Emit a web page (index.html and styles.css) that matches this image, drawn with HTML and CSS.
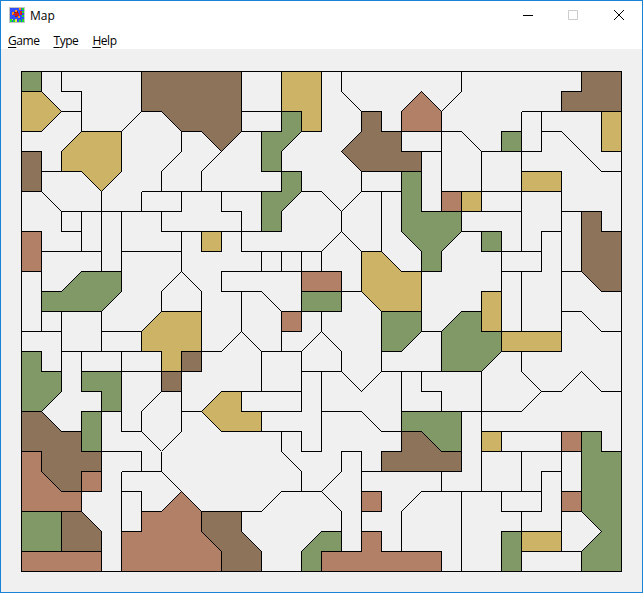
FILE: index.html
```html
<!DOCTYPE html>
<html lang="en">
<head>
<meta charset="utf-8">
<title>Map</title>
<link rel="stylesheet" href="styles.css">
</head>
<body>
<div class="window">
  <header class="titlebar">
    <svg class="app-icon" width="16" height="16" viewBox="0 0 16 16" shape-rendering="crispEdges">
      <path fill="#c4c4c4" d="M0 0h16v16H0z"/>
      <path fill="#2f4fff" d="M1 1h14v14H1z"/>
      <path fill="#16e02c" d="M13 1h2v2h-2zM13 4h2v2h-2zM1 12h2v3H1zM4 13h2v2H4zM10 13h2v2h-2zM13 12h2v3h-2zM13 8h2v2h-2z"/>
      <path fill="#ff8a1c" d="M10 1h2v2h-2zM3 5h2v3H3zM6 3h2v2H6zM9 9h2v2H9z"/>
      <path fill="#d81c1c" d="M6 5h2v4H6zM11 4h2v4h-2zM4 7h3v1H4zM8 6h2v3H8z"/>
      <path fill="#8a2818" d="M5 5h2v1H5zM8 4h1v2H8zM6 9h2v1H6z"/>
      <path fill="#e8e43a" d="M3 12h1v1H3zM6 12h2v3H6z"/>
    </svg>
    <span class="title">Map</span>
    <div class="controls">
      <svg class="control control-min" width="10" height="10" viewBox="0 0 10 10"><path d="M0 5.5h10"/></svg>
      <svg class="control control-off" width="10" height="10" viewBox="0 0 10 10"><path d="M.5 .5h9v9h-9z"/></svg>
      <svg class="control" width="10" height="10" viewBox="0 0 10 10"><path d="M0 0L10 10M10 0L0 10"/></svg>
    </div>
  </header>
  <nav class="menubar">
    <span class="menu"><u>G</u>ame</span>
    <span class="menu"><u>T</u>ype</span>
    <span class="menu"><u>H</u>elp</span>
  </nav>
  <main class="board">
    <svg width="602" height="502" viewBox="-0.025 -0.025 30.1 25.1" shape-rendering="crispEdges">
      <path class="green" d="M0 0H1V1H0z
        M13 2H14V3L13 4V5H12V3H13z
        M13 5H14V6L13 7V8H12V6H13z
        M19 5H20V7H22V8L21 9V10H20V9L19 8z
        M24 3H25V4H24z M23 8H24V9H23z
        M3 10H5V11L4 12H1V11H2z
        M14 11H16V12H14z
        M18 12H20V13L19 14H18z
        M22 12H23V13H24V14L23 15H21V13z
        M0 14H1V15H2V16L1 17H0z
        M3 15H5V17H4V16H3z
        M3 17H4V19H3z M0 22H2V24H0z
        M19 17H22V19H21L20 18H19z
        M15 23H16V24H15V25H14V24z
        M24 23H25V25H24z
        M28 18H29V19H30V25H28V24L29 23L28 22z"/>
      <path class="yellow" d="M0 1H1L2 2L1 3H0z
        M3 3H5V5L4 6L3 5H2V4z
        M13 0H15V3H14V2H13z
        M29 2H30V4H29z M25 5H27V6H25z M22 6H23V7H22z M9 8H10V9H9z
        M17 9H18L19 10H20V12H18L17 11z
        M23 11H24V13H23z M24 13H27V14H24z
        M7 12H9V14H8V15H7V14H6V13z
        M10 16H11V17H12V18H10L9 17z
        M23 18H24V19H23z M25 23H27V24H25z"/>
      <path class="brown" d="M6 0H11V3L10 4L9 3H8L7 2H6z
        M0 4H1V6H0z
        M17 2H18V3H19V4H20V5H17L16 4L17 3z
        M28 0H30V2H27V1H28z
        M28 7H29V8H30V11H29L28 10z
        M8 14H9V15H8z M7 15H8V16H7z
        M19 18H20L21 19H22V20H18V19H19z
        M0 17H1L2 18H3V19H4V20H3V21H2L1 20V19H0z
        M2 22H3L4 23V24H2z
        M9 22H11V23L12 24V25H10V24L9 23z"/>
      <path class="red" d="M20 1L21 2V3H19V2z
        M21 6H22V7H21z M0 8H1V10H0z M14 10H16V11H14z M13 12H14V13H13z
        M0 19H1V20L2 21H3V22H0z
        M3 20H4V21H3z M0 24H4V25H0z
        M8 21L9 22V23L10 24V25H5V23H6V22H7z
        M17 21H18V22H17z
        M15 24H17V23H18V24H21V25H15z
        M27 18H28V19H27z M27 21H28V22H27z"/>
      <path class="border" d="M0 0H30V25H0z
        M2 0V1H3V3H5 M2 2H3 M6 2L5 3 M1 5H2 M1 6L2 7H8 M4 6V10
        M2 7V8H3 M3 7V9 M5 7V10 M8 3V4L7 5V6 M10 4L9 5V6 M6 6H13
        M6 6V7 M8 6V7 M10 6V7H11V9 M7 7V8H13 M8 8V10
        M11 2H13 M11 3H13 M13 5V6 M14 6H15L16 7L17 6H19 M16 7V8L15 9
        M16 8L17 9 M17 5V6 M18 6V9 M16 0V1L17 2 M19 3H21 M20 4H21 M20 4V7
        M22 0V1L21 2 M21 3H22L23 4H25 M21 3V7 M23 4V7 M21 6H27 M20 7H25
        M25 2V9 M26 2V4H25 M25 2H30 M26 3H27L29 5H30 M27 6V14 M27 7H28
        M22 8H24 M24 8V14 M27 8H26V10H24 M24 9H26 M25 10V13 M27 10H28
        M27 12H28L29 13H30 M20 10V13H21 M25 14V15L26 16H27L28 15L29 16H30
        M26 16L25 17H19 M18 15H23 M20 15V16H21V17 M23 15V21
        M1 9H4 M5 9H8 M1 8V13 M0 13H2 M2 12V16 M4 12V14 M4 13H6
        M2 14H7 M3 14V15 M5 14V15 M5 15H9 M7 12V11L8 10L9 11V12
        M9 14H10L11 13L12 14H14 M14 10H10V11H12L13 12 M8 16V18L7 19
        M7 16L6 17V18L7 19 M5 17V18H6 M8 17H9
        M11 9H15 M12 9V10 M13 9V10 M14 9V12 M15 9V10 M16 11H17 M11 11V13
        M13 13V14 M15 12V13L14 14 M15 13L16 14V15L17 16L18 15 M14 15H16
        M18 14V15 M12 14V16 M11 16H14 M14 14V17H11 M15 15V19H14V18H12
        M19 15V17 M15 17H17L18 18H19 M13 18V19L14 20V21
        M9 22H12L13 21H15L16 20V19H17V24 M15 21L16 22V24 M17 20H18
        M19 24V22L20 21H26 M21 20V21 M22 21V25
        M23 18H27 M23 19H28 M25 19V21 M27 19V24 M27 20H26V22H24V21
        M25 22V23 M25 24H28
        M3 17H4V21 M4 19H6V20 M5 20H7 M7 19V20L8 21 M5 20V25
        M5 21H6V23H5 M4 24V25"/>
    </svg>
  </main>
</div>
</body>
</html>
```

FILE: styles.css
```css
body {
  margin: 0;
}

.window {
  box-sizing: border-box;
  width: 643px;
  height: 593px;
  border: 1px solid #1883d7;
  background: #f0f0f0;
  color: #000;
  font: 12px/16px "Open Sans", "Noto Sans", sans-serif;
  overflow: hidden;
}

.titlebar {
  display: flex;
  align-items: center;
  box-sizing: border-box;
  height: 30px;
  padding: 0 18px 2px 8px;
  background: #fff;
}

.app-icon {
  margin-right: 5px;
}

.title {
  padding-top: 2px;
}

.controls {
  display: flex;
  gap: 36px;
  margin-left: auto;
}

.control {
  display: block;
  fill: none;
  stroke: #000;
  stroke-width: 1;
}

.control-min {
  margin-right: -1px;
}

.control-off {
  stroke: #ccc;
}

.menubar {
  display: flex;
  gap: 14px;
  box-sizing: border-box;
  height: 18px;
  padding: 2px 7px 0;
  background: #fff;
  letter-spacing: -0.45px;
}

.menu u {
  text-decoration-thickness: 1px;
  text-underline-offset: 2px;
}

.board {
  padding: 22px 20px;
}

.board svg {
  display: block;
}

.board path {
  stroke: #000;
  stroke-width: 0.05;
}

.green {
  fill: #809966;
}

.yellow {
  fill: #ccb366;
}

.brown {
  fill: #8c7359;
}

.red {
  fill: #b28066;
}

.board .border {
  fill: none;
}
```
